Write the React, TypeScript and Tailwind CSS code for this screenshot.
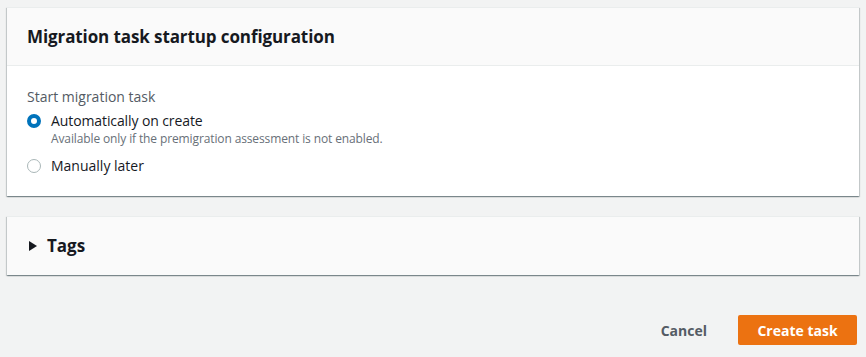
export default function App() {
  const card =
    "mx-[7px] border-t border-[#eaeded] shadow-[0_1px_1px_0_rgba(0,28,36,0.3),1px_1px_1px_0_rgba(0,28,36,0.15),-1px_1px_1px_0_rgba(0,28,36,0.15)]";
  return (
    <div
      className="w-[866px] h-[357px] bg-[#f2f3f3] pt-[7px] text-[#16191f]"
      style={{ fontFamily: '"Open Sans", "Noto Sans", Arial, sans-serif' }}
    >
      <div className={card + " bg-white"}>
        <div className="bg-[#fafafa] border-b border-[#eaeded] h-[58px] px-[20px] flex items-center">
          <h2 className="text-[17px] font-bold tracking-[-0.1px]">Migration task startup configuration</h2>
        </div>
        <div className="px-[20px] pt-[21px] pb-[20px]">
          <div className="text-[14px] text-[#545b64] leading-[20px]">Start migration task</div>
          <div className="mt-[4px] flex items-start gap-[10px]">
            <span className="mt-[3px] w-[14px] h-[14px] rounded-full border-[4px] border-[#0073bb] bg-white shrink-0" />
            <div>
              <div className="text-[14px] leading-[20px] tracking-[-0.1px]">Automatically on create</div>
              <div className="text-[12px] leading-[16px] text-[#687078] tracking-[-0.12px]">
                Available only if the premigration assessment is not enabled.
              </div>
            </div>
          </div>
          <div className="mt-[9px] flex items-start gap-[10px]">
            <span className="mt-[3px] w-[14px] h-[14px] rounded-full border border-[#aab7b8] bg-white shrink-0" />
            <div className="text-[14px] leading-[20px]">Manually later</div>
          </div>
        </div>
      </div>

      <div className={card + " mt-[20px] bg-[#fafafa] h-[59px] px-[22px] flex items-center gap-[10px]"}>
        <svg width="8" height="10" viewBox="0 0 8 10">
          <path d="M0 0 L8 5 L0 10 Z" fill="#16191f" />
        </svg>
        <h2 className="text-[17px] font-bold">Tags</h2>
      </div>

      <div className="mt-[40px] mr-[9px] flex justify-end items-center gap-[31px]">
        <button className="text-[14px] font-bold text-[#545b64]">Cancel</button>
        <button className="w-[119px] h-[30px] rounded-[2px] bg-[#ec7211] text-white text-[14px] font-bold">
          Create task
        </button>
      </div>
    </div>
  );
}
